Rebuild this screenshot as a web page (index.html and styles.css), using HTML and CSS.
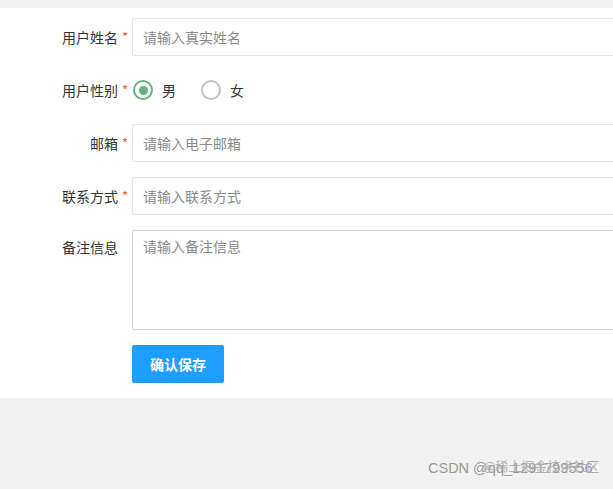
FILE: index.html
```html
<!DOCTYPE html>
<html lang="zh">
<head>
<meta charset="utf-8">
<title>用户信息</title>
<link rel="stylesheet" href="styles.css">
</head>
<body>
<div class="page">
  <form class="panel">
    <div class="row">
      <div class="label"><span class="text">用户姓名</span><span class="req">*</span></div>
      <div class="field"><input class="input" type="text" placeholder="请输入真实姓名"></div>
    </div>
    <div class="row">
      <div class="label"><span class="text">用户性别</span><span class="req">*</span></div>
      <div class="field radios">
        <label class="radio"><span class="dot on"></span><span class="rtext">男</span></label>
        <label class="radio"><span class="dot"></span><span class="rtext">女</span></label>
      </div>
    </div>
    <div class="row">
      <div class="label"><span class="text">邮箱</span><span class="req">*</span></div>
      <div class="field"><input class="input" type="text" placeholder="请输入电子邮箱"></div>
    </div>
    <div class="row">
      <div class="label"><span class="text">联系方式</span><span class="req">*</span></div>
      <div class="field"><input class="input" type="text" placeholder="请输入联系方式"></div>
    </div>
    <div class="row">
      <div class="label top"><span class="text">备注信息</span><span class="req"></span></div>
      <div class="field"><textarea class="area" placeholder="请输入备注信息"></textarea></div>
    </div>
    <div class="row last">
      <div class="label"></div>
      <div class="field"><button type="button" class="btn">确认保存</button></div>
    </div>
  </form>
</div>
<div class="wm">
  <span class="wm-a">CSDN @qq_1291799556</span>
  <span class="wm-b">@稀土掘金技术社区</span>
</div>
</body>
</html>
```
FILE: styles.css
```css
html, body {
  margin: 0;
  padding: 0;
  overflow: hidden;
}
body {
  background: #f2f2f2;
  font-family: "Noto Sans CJK SC", "Noto Sans", sans-serif;
  font-size: 14px;
  color: #333;
  height: 489px;
}
.page {
  padding-top: 8px;
}
.panel {
  background: #fff;
  padding: 10px 0 15px 0;
  width: 613px;
}
.row {
  display: flex;
  align-items: center;
  margin-bottom: 15px;
  min-height: 38px;
}
.row.last {
  margin-bottom: 0;
}
.label {
  width: 132px;
  flex: none;
  display: flex;
  justify-content: flex-end;
  align-items: center;
  line-height: 20px;
  font-size: 14px;
  color: #333;
  padding-bottom: 1px;
  box-sizing: border-box;
}
.label.top {
  align-self: flex-start;
  padding-top: 7px;
}
.req {
  width: 14px;
  padding-left: 4px;
  box-sizing: border-box;
  color: #ff5722;
  font-size: 13px;
}
.field {
  flex: none;
  width: 560px;
}
.input {
  display: block;
  width: 100%;
  height: 38px;
  box-sizing: border-box;
  border: 1px solid #e6e6e6;
  border-radius: 2px;
  padding: 0 10px 1px 10px;
  font-family: inherit;
  font-size: 14px;
  color: #333;
  outline: none;
}
.input::placeholder, .area::placeholder {
  color: #8a8a8a;
}
.area {
  display: block;
  width: 100%;
  height: 100px;
  box-sizing: border-box;
  border: 1px solid #d2d2d2;
  border-radius: 2px;
  padding: 5px 10px;
  line-height: 20px;
  font-family: inherit;
  font-size: 14px;
  resize: none;
  outline: none;
}
.radios {
  display: flex;
  align-items: center;
  gap: 25px;
  height: 38px;
}
.radio {
  display: flex;
  align-items: center;
  gap: 9px;
  color: #333;
  padding-left: 1px;
}
.radios .radio + .radio {
  padding-left: 0;
}
.dot {
  width: 20px;
  height: 20px;
  box-sizing: border-box;
  border: 2px solid #c2c2c2;
  border-radius: 50%;
  display: flex;
  align-items: center;
  justify-content: center;
}
.dot.on {
  border-color: #5fb878;
}
.dot.on::after {
  content: "";
  width: 9px;
  height: 9px;
  border-radius: 50%;
  background: #5fb878;
}
.rtext {
  font-size: 14px;
}
.btn {
  width: 92px;
  height: 38px;
  border: none;
  border-radius: 2px;
  background: #1e9fff;
  color: #fff;
  font-family: inherit;
  font-size: 14px;
  font-weight: bold;
  cursor: pointer;
  padding: 0 0 1px 0;
}
.wm {
  position: absolute;
  left: 428px;
  top: 460px;
  font-size: 14px;
  color: #9a9a9a;
  white-space: nowrap;
}
.wm-a {
  position: absolute;
  left: 0;
  top: 0;
  font-family: "Liberation Sans", Arial, sans-serif;
  font-size: 14.5px;
}
.wm-b {
  position: absolute;
  left: 55px;
  top: -4px;
  font-size: 13px;
  color: #b0b0b0;
}
```
